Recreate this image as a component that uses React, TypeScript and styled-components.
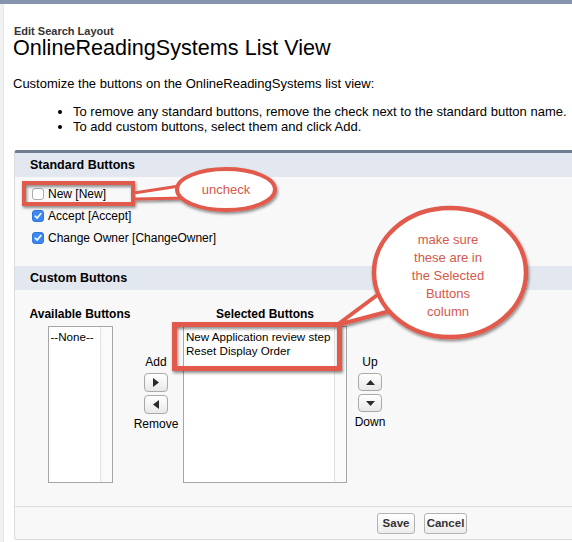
import React from 'react'
import styled, { createGlobalStyle } from 'styled-components'

const GlobalStyle = createGlobalStyle`
  html, body {
    margin: 0;
    padding: 0;
    background: #ffffff;
  }
  body {
    font-family: "Liberation Sans", Arial, Helvetica, sans-serif;
    color: #000;
  }
`

const Page = styled.div`
  position: relative;
  width: 572px;
  height: 542px;
  overflow: hidden;
  box-sizing: border-box;
  border-top: 4px solid #8595ad;
  display: flex;
  background: #ffffff;
`

const SideStrip = styled.div`
  width: 3px;
  flex: none;
  background: #f1f1f1;
  border-right: 1px solid #e6e6e6;
`

const Content = styled.div`
  flex: 1;
  padding-left: 9px;
  padding-top: 21px;
`

const Breadcrumb = styled.div`
  font-size: 11px;
  line-height: 12px;
  font-weight: bold;
  color: #333333;
  padding-left: 1px;
`

const Title = styled.h1`
  margin: 0;
  font-size: 21.6px;
  line-height: 22px;
  font-weight: normal;
  color: #000;
`

const Intro = styled.p`
  margin: 17px 0 0;
  font-size: 13px;
  line-height: 15px;
`

const Bullets = styled.ul`
  margin: 13px 0 0;
  padding-left: 60px;
  font-size: 13px;
  line-height: 15px;
`

const Panel = styled.div`
  margin-top: 16px;
  margin-left: 1px;
  width: 814px;
  border-top: 3px solid #717c90;
  border-left: 1px solid #dcdcdc;
  border-bottom: 1px solid #dcdcdc;
  background: #f8f8f8;
  border-radius: 3px 0 0 3px;
`

const SectionHeader = styled.div`
  height: 24px;
  line-height: 24px;
  padding-left: 15px;
  background: #e3e8f0;
  font-size: 12.5px;
  font-weight: bold;
  color: #000;
`

const StandardBody = styled.div`
  padding: 6px 17px 17px;
  display: flex;
  flex-direction: column;
`

const CheckRow = styled.label`
  height: 22px;
  display: flex;
  align-items: center;
  gap: 4px;
  font-size: 12px;
`

const Box = styled.span<{ $checked?: boolean }>`
  width: 12px;
  height: 12px;
  box-sizing: border-box;
  border-radius: 3px;
  display: flex;
  align-items: center;
  justify-content: center;
  background: ${p => (p.$checked ? '#3a87f5' : '#ffffff')};
  border: 1px solid ${p => (p.$checked ? '#2f76dd' : '#adadad')};
`

const CustomBody = styled.div`
  height: 217px;
  box-sizing: border-box;
  padding: 17px 15px 0;
  display: flex;
  align-items: flex-start;
  border-bottom: 1px solid #dedede;
`

const ListColumn = styled.div<{ $width: number }>`
  width: ${p => p.$width}px;
  display: flex;
  flex-direction: column;
  align-items: center;
`

const ColumnLabel = styled.div`
  font-size: 12px;
  font-weight: bold;
  line-height: 14px;
  margin-bottom: 5px;
  white-space: nowrap;
`

const ListBox = styled.div<{ $width: number }>`
  width: ${p => p.$width}px;
  height: 157px;
  box-sizing: border-box;
  border: 1px solid #a6a6a6;
  background: #ffffff;
  display: flex;
`

const ListItems = styled.div`
  flex: 1;
  padding: 3px 2px;
  font-size: 11.6px;
  line-height: 14px;
  white-space: nowrap;
  overflow: hidden;
`

const ListTrack = styled.div`
  width: 11px;
  border-left: 1px solid #e2e2e2;
  background: #fafafa;
`

const MoveColumn = styled.div<{ $width: number }>`
  width: ${p => p.$width}px;
  padding-top: 48px;
  display: flex;
  flex-direction: column;
  align-items: center;
  font-size: 12px;
  line-height: 14px;
`

const MoveButton = styled.button<{ $h: number }>`
  width: 24px;
  height: ${p => p.$h}px;
  margin-top: 3px;
  padding: 0;
  box-sizing: border-box;
  border: 1px solid #a9a9a9;
  border-radius: 4px;
  background: linear-gradient(#ffffff, #e9e9e9);
  display: flex;
  align-items: center;
  justify-content: center;
  &:first-of-type {
    margin-top: 4px;
  }
`

const MoveCaption = styled.div`
  margin-top: 3px;
`

const Footer = styled.div`
  height: 32px;
  display: flex;
  justify-content: center;
  align-items: center;
  gap: 9px;
`

const FooterButton = styled.button<{ $width: number }>`
  width: ${p => p.$width}px;
  height: 21px;
  padding: 0;
  font-family: "Liberation Sans", Arial, sans-serif;
  font-size: 11.5px;
  font-weight: bold;
  color: #333;
  border: 1px solid #b3b3b3;
  border-radius: 3px;
  background: linear-gradient(#ffffff, #ececec);
`

const Overlay = styled.svg`
  position: absolute;
  left: 0;
  top: 0;
  pointer-events: none;
`

const CalloutText = styled.text`
  font-family: "Liberation Sans", Arial, sans-serif;
  font-size: 13px;
  fill: #d4584c;
`

const RED = '#e15a4c'

function Triangle({ dir }: { dir: 'left' | 'right' | 'up' | 'down' }) {
  const pts = {
    right: '0,0 6,4.5 0,9',
    left: '6,0 0,4.5 6,9',
    up: '0,5 4.5,0 9,5',
    down: '0,0 9,0 4.5,5',
  }[dir]
  const vertical = dir === 'up' || dir === 'down'
  return (
    <svg width={vertical ? 9 : 6} height={vertical ? 5 : 9} viewBox={vertical ? '0 0 9 5' : '0 0 6 9'}>
      <polygon points={pts} fill="#2b2b2b" />
    </svg>
  )
}

function Check({ checked, label }: { checked?: boolean; label: string }) {
  return (
    <CheckRow>
      <Box $checked={checked}>
        {checked && (
          <svg width="8" height="8" viewBox="0 0 8 8">
            <path d="M1.2 4.2 L3.2 6.1 L6.9 1.6" stroke="#fff" strokeWidth="1.6" fill="none" strokeLinecap="round" strokeLinejoin="round" />
          </svg>
        )}
      </Box>
      {label}
    </CheckRow>
  )
}

export default function App() {
  return (
    <>
      <GlobalStyle />
      <Page>
        <SideStrip />
        <Content>
          <Breadcrumb>Edit Search Layout</Breadcrumb>
          <Title>OnlineReadingSystems List View</Title>
          <Intro>Customize the buttons on the OnlineReadingSystems list view:</Intro>
          <Bullets>
            <li>To remove any standard buttons, remove the check next to the standard button name.</li>
            <li>To add custom buttons, select them and click Add.</li>
          </Bullets>

          <Panel>
            <SectionHeader>Standard Buttons</SectionHeader>
            <StandardBody>
              <Check label="New [New]" />
              <Check checked label="Accept [Accept]" />
              <Check checked label="Change Owner [ChangeOwner]" />
            </StandardBody>

            <SectionHeader>Custom Buttons</SectionHeader>
            <CustomBody>
              <ListColumn $width={100}>
                <ColumnLabel>Available Buttons</ColumnLabel>
                <ListBox $width={65}>
                  <ListItems>--None--</ListItems>
                  <ListTrack />
                </ListBox>
              </ListColumn>
              <MoveColumn $width={52}>
                Add
                <MoveButton $h={19}><Triangle dir="right" /></MoveButton>
                <MoveButton $h={19}><Triangle dir="left" /></MoveButton>
                <MoveCaption>Remove</MoveCaption>
              </MoveColumn>
              <ListColumn $width={166}>
                <ColumnLabel>Selected Buttons</ColumnLabel>
                <ListBox $width={164}>
                  <ListItems>
                    New Application review step
                    <br />
                    Reset Display Order
                  </ListItems>
                  <ListTrack />
                </ListBox>
              </ListColumn>
              <MoveColumn $width={44}>
                Up
                <MoveButton $h={18}><Triangle dir="up" /></MoveButton>
                <MoveButton $h={18}><Triangle dir="down" /></MoveButton>
                <MoveCaption>Down</MoveCaption>
              </MoveColumn>
            </CustomBody>
            <Footer>
              <FooterButton $width={38}>Save</FooterButton>
              <FooterButton $width={43}>Cancel</FooterButton>
            </Footer>
          </Panel>
        </Content>

        <Overlay width="572" height="542" viewBox="0 0 572 542">
          <defs>
            <filter id="shadow" x="-20%" y="-20%" width="140%" height="140%">
              <feDropShadow dx="1" dy="2" stdDeviation="1.5" floodColor="#000" floodOpacity="0.45" />
            </filter>
          </defs>
          <g filter="url(#shadow)">
            <rect x="24" y="179" width="109" height="21" fill="none" stroke={RED} strokeWidth="4" />
            <polygon points="134,189 134,195 186,194 186,181" fill="#fff" stroke={RED} strokeWidth="3" strokeLinejoin="round" />
            <ellipse cx="226" cy="185.5" rx="49" ry="20.5" fill="#fff" stroke={RED} strokeWidth="4" />

            <rect x="174.5" y="320.5" width="165" height="44" fill="none" stroke={RED} strokeWidth="5" />
            <polygon points="337,321 380,289 390,307" fill="#fff" stroke={RED} strokeWidth="4" strokeLinejoin="round" />
            <ellipse cx="450" cy="268.5" rx="76" ry="64.5" fill="#fff" stroke={RED} strokeWidth="4.5" />
          </g>
          <CalloutText x="226" y="190" textAnchor="middle">uncheck</CalloutText>
          <CalloutText textAnchor="middle">
            <tspan x="448" y="240">make sure</tspan>
            <tspan x="448" y="258">these are in</tspan>
            <tspan x="448" y="276">the Selected</tspan>
            <tspan x="448" y="294">Buttons</tspan>
            <tspan x="448" y="312">column</tspan>
          </CalloutText>
        </Overlay>
      </Page>
    </>
  )
}
